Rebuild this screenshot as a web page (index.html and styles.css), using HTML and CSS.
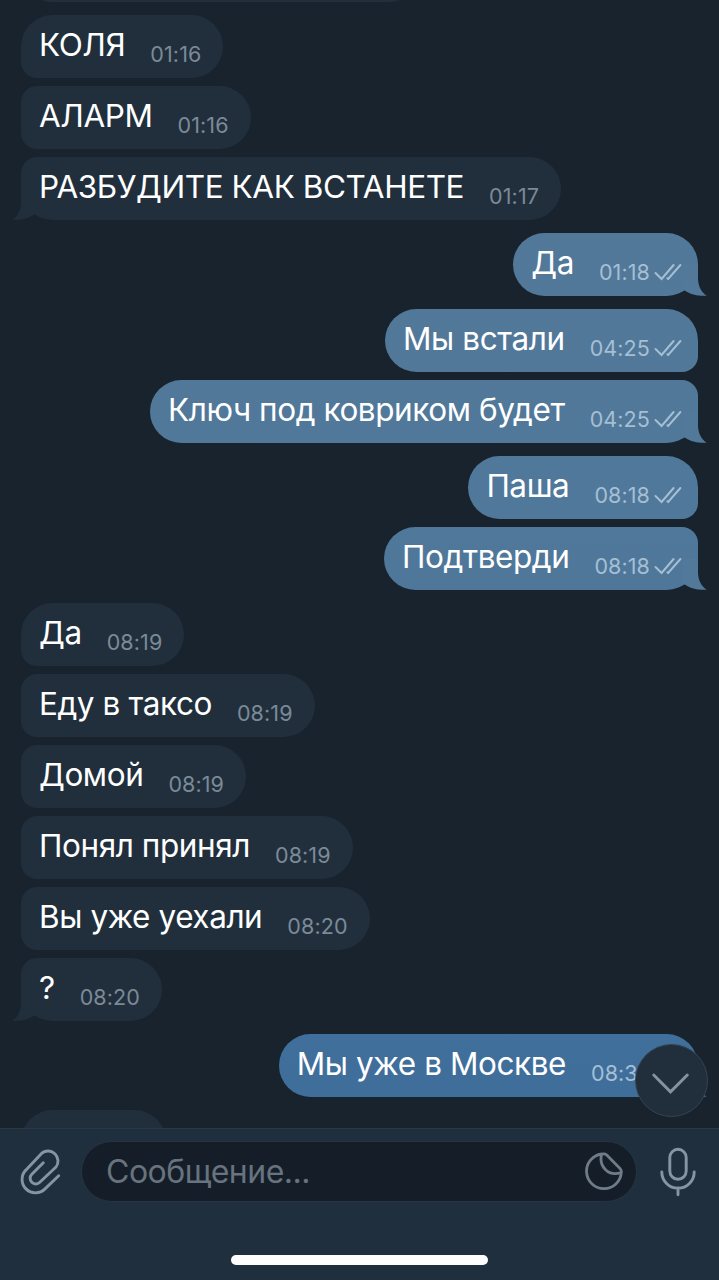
FILE: index.html
```html
<!DOCTYPE html>
<html lang="ru">
<head>
    <meta charset="UTF-8">
    <meta name="viewport" content="width=device-width, initial-scale=1.0">
    <title>Чат</title>
    <link rel="stylesheet" href="styles.css">
</head>
<body>
    <svg class="defs">
        <symbol id="checks" viewBox="0 0 28 18">
            <path d="M1.5 10 L7.6 16 L19.6 2 M13.4 15.4 L14.2 16 L26.4 2" />
        </symbol>
        <symbol id="tail" viewBox="0 0 24 31">
            <path d="M0 0 H15 V14 C15.300 21 18 27 23.700 30.700 C16 31.200 8 30 2.200 25.800 L0 25 Z" />
        </symbol>
    </svg>

    <div class="chat">
        <div class="msg in last cut"></div>

        <div class="msg in first"><span class="text">КОЛЯ</span><span class="time">01:16</span></div>
        <div class="msg in"><span class="text">АЛАРМ</span><span class="time">01:16</span></div>
        <div class="msg in last"><svg class="tail"><use href="#tail"/></svg><span class="text">РАЗБУДИТЕ КАК ВСТАНЕТЕ</span><span class="time">01:17</span></div>

        <div class="msg out first last"><svg class="tail"><use href="#tail"/></svg><span class="text">Да</span><span class="time">01:18</span><svg class="checks"><use href="#checks"/></svg></div>

        <div class="msg out first"><span class="text">Мы встали</span><span class="time">04:25</span><svg class="checks"><use href="#checks"/></svg></div>
        <div class="msg out last"><svg class="tail"><use href="#tail"/></svg><span class="text">Ключ под ковриком будет</span><span class="time">04:25</span><svg class="checks"><use href="#checks"/></svg></div>

        <div class="msg out first"><span class="text">Паша</span><span class="time">08:18</span><svg class="checks"><use href="#checks"/></svg></div>
        <div class="msg out last"><svg class="tail"><use href="#tail"/></svg><span class="text">Подтверди</span><span class="time">08:18</span><svg class="checks"><use href="#checks"/></svg></div>

        <div class="msg in first"><span class="text">Да</span><span class="time">08:19</span></div>
        <div class="msg in"><span class="text">Еду в таксо</span><span class="time">08:19</span></div>
        <div class="msg in"><span class="text">Домой</span><span class="time">08:19</span></div>
        <div class="msg in"><span class="text">Понял принял</span><span class="time">08:19</span></div>
        <div class="msg in"><span class="text">Вы уже уехали</span><span class="time">08:20</span></div>
        <div class="msg in last"><svg class="tail"><use href="#tail"/></svg><span class="text">?</span><span class="time">08:20</span></div>

        <div class="msg out first last newest"><svg class="tail"><use href="#tail"/></svg><span class="text">Мы уже в Москве</span><span class="time">08:3</span><svg class="checks"><use href="#checks"/></svg></div>

        <div class="msg in first next"></div>

        <button class="scroll-down">
            <svg viewBox="0 0 72 72"><path d="M18 30.500 L35 47.500 L52 30.500" /></svg>
        </button>
    </div>

    <div class="panel">
        <div class="input-row">
            <svg class="icon attach" viewBox="0 0 44 50">
                <path d="M23.300 15.800 L11.800 27.300 A5.650 5.650 0 0 0 19.800 35.300 L36 20 A10 10 0 0 0 22 6 L6 22.900 A13.400 13.400 0 0 0 25 41.900 L38.700 28.800" />
            </svg>
            <div class="field">
                <span class="placeholder">Сообщение...</span>
                <svg class="sticker" viewBox="0 0 40 40">
                    <path d="M17.700 2 A17.400 17.400 0 1 0 37.300 20.300 C37.600 18.500 37 17.500 36 16.500 L22.500 2.800 C21 1.500 19.500 1.600 17.700 2 Z M17.700 2 C14.500 14 24 25 37.300 20.500" />
                </svg>
            </div>
            <svg class="icon mic" viewBox="0 0 36 50">
                <rect x="9.800" y="2.300" width="16.400" height="30" rx="8.200" />
                <path d="M1.800 25 A16.200 16.200 0 0 0 34.200 25 M18 41 V47.700" />
            </svg>
        </div>
        <div class="home-bar"></div>
    </div>
</body>
</html>
```
FILE: styles.css
```css
body {
    margin: 0;
    width: 719px;
    height: 1280px;
    overflow: hidden;
    background-color: #18232d;
    color: #fff;
    font-family: Inter, "Noto Sans", sans-serif;
}
.defs {
    display: none;
}
.chat {
    position: relative;
    box-sizing: border-box;
    height: 1128px;
    padding: 0 21px;
    overflow: hidden;
    display: flex;
    flex-direction: column;
}
.msg {
    position: relative;
    flex: none;
    box-sizing: border-box;
    height: 63px;
    margin-top: 8px;
    display: flex;
    align-items: flex-start;
    white-space: nowrap;
}
.first {
    margin-top: 13px;
}
.in {
    align-self: flex-start;
    padding: 0 22px 0 18px;
    background-color: #212f3d;
    border-radius: 16px 31.5px 31.5px 16px;
}
.in.first {
    border-top-left-radius: 31.5px;
}
.in.last {
    border-bottom-left-radius: 31.5px;
}
.out {
    align-self: flex-end;
    padding: 0 16px 0 18px;
    background: linear-gradient(#547998, #50789a 40%, #3f6e9b 85%) fixed;
    border-radius: 31.5px 16px 16px 31.5px;
}
.out.first {
    border-top-right-radius: 31.5px;
}
.out.last {
    border-bottom-right-radius: 31.5px;
}
.cut {
    width: 400px;
    margin-top: -61px;
}
.next {
    width: 145px;
}
.text {
    font-size: 31.5px;
    line-height: 38px;
    letter-spacing: -0.42px;
    margin-top: 11px;
}
.time {
    font-size: 21.5px;
    line-height: 26px;
    letter-spacing: 0.1px;
    margin-top: 26px;
    margin-left: 25px;
    color: #7b8a97;
}
.out .time {
    color: #a5bfd4;
}
.newest .time {
    width: 59px;
}
.checks {
    width: 28px;
    height: 18px;
    margin: 30px 0 0 4px;
    fill: none;
    stroke: #a5bfd4;
    stroke-width: 2;
    stroke-linecap: round;
}
.tail {
    position: absolute;
    bottom: 0;
    width: 24px;
    height: 31px;
}
.in .tail {
    left: -9px;
    fill: #212f3d;
    transform: scaleX(-1);
}
.out .tail {
    right: -9px;
    fill: #52799a;
}
.newest .tail {
    fill: #416f9b;
}
.scroll-down {
    position: absolute;
    right: 11px;
    bottom: 11px;
    width: 73px;
    height: 73px;
    padding: 0;
    border: 1px solid #36444f;
    border-radius: 50%;
    background-color: #212f3d;
}
.scroll-down svg {
    display: block;
    fill: none;
    stroke: #8493a0;
    stroke-width: 3;
    stroke-linecap: round;
}
.panel {
    box-sizing: border-box;
    height: 152px;
    border-top: 1px solid #2a3844;
    background-color: #202f3d;
}
.input-row {
    display: flex;
    align-items: center;
    padding: 12px 23px 0 20px;
}
.icon {
    fill: none;
    stroke: #8496a5;
    stroke-width: 2.9;
    stroke-linecap: round;
    stroke-linejoin: round;
}
.attach {
    width: 44px;
    height: 50px;
}
.field {
    flex: 1;
    box-sizing: border-box;
    height: 61px;
    margin: 0 23px 0 17px;
    padding: 0 12px 0 24px;
    border: 1px solid #273441;
    border-radius: 31px;
    background-color: #151e28;
    display: flex;
    align-items: center;
    justify-content: space-between;
}
.placeholder {
    font-size: 32px;
    line-height: 40px;
    letter-spacing: -0.5px;
    color: #67737f;
}
.sticker {
    width: 40px;
    height: 40px;
    fill: none;
    stroke: #6f7b87;
    stroke-width: 2.8;
    stroke-linejoin: round;
}
.mic {
    width: 36px;
    height: 50px;
}
.home-bar {
    width: 257px;
    height: 10px;
    margin: 53px auto 0;
    border-radius: 5px;
    background-color: #fff;
}
```
